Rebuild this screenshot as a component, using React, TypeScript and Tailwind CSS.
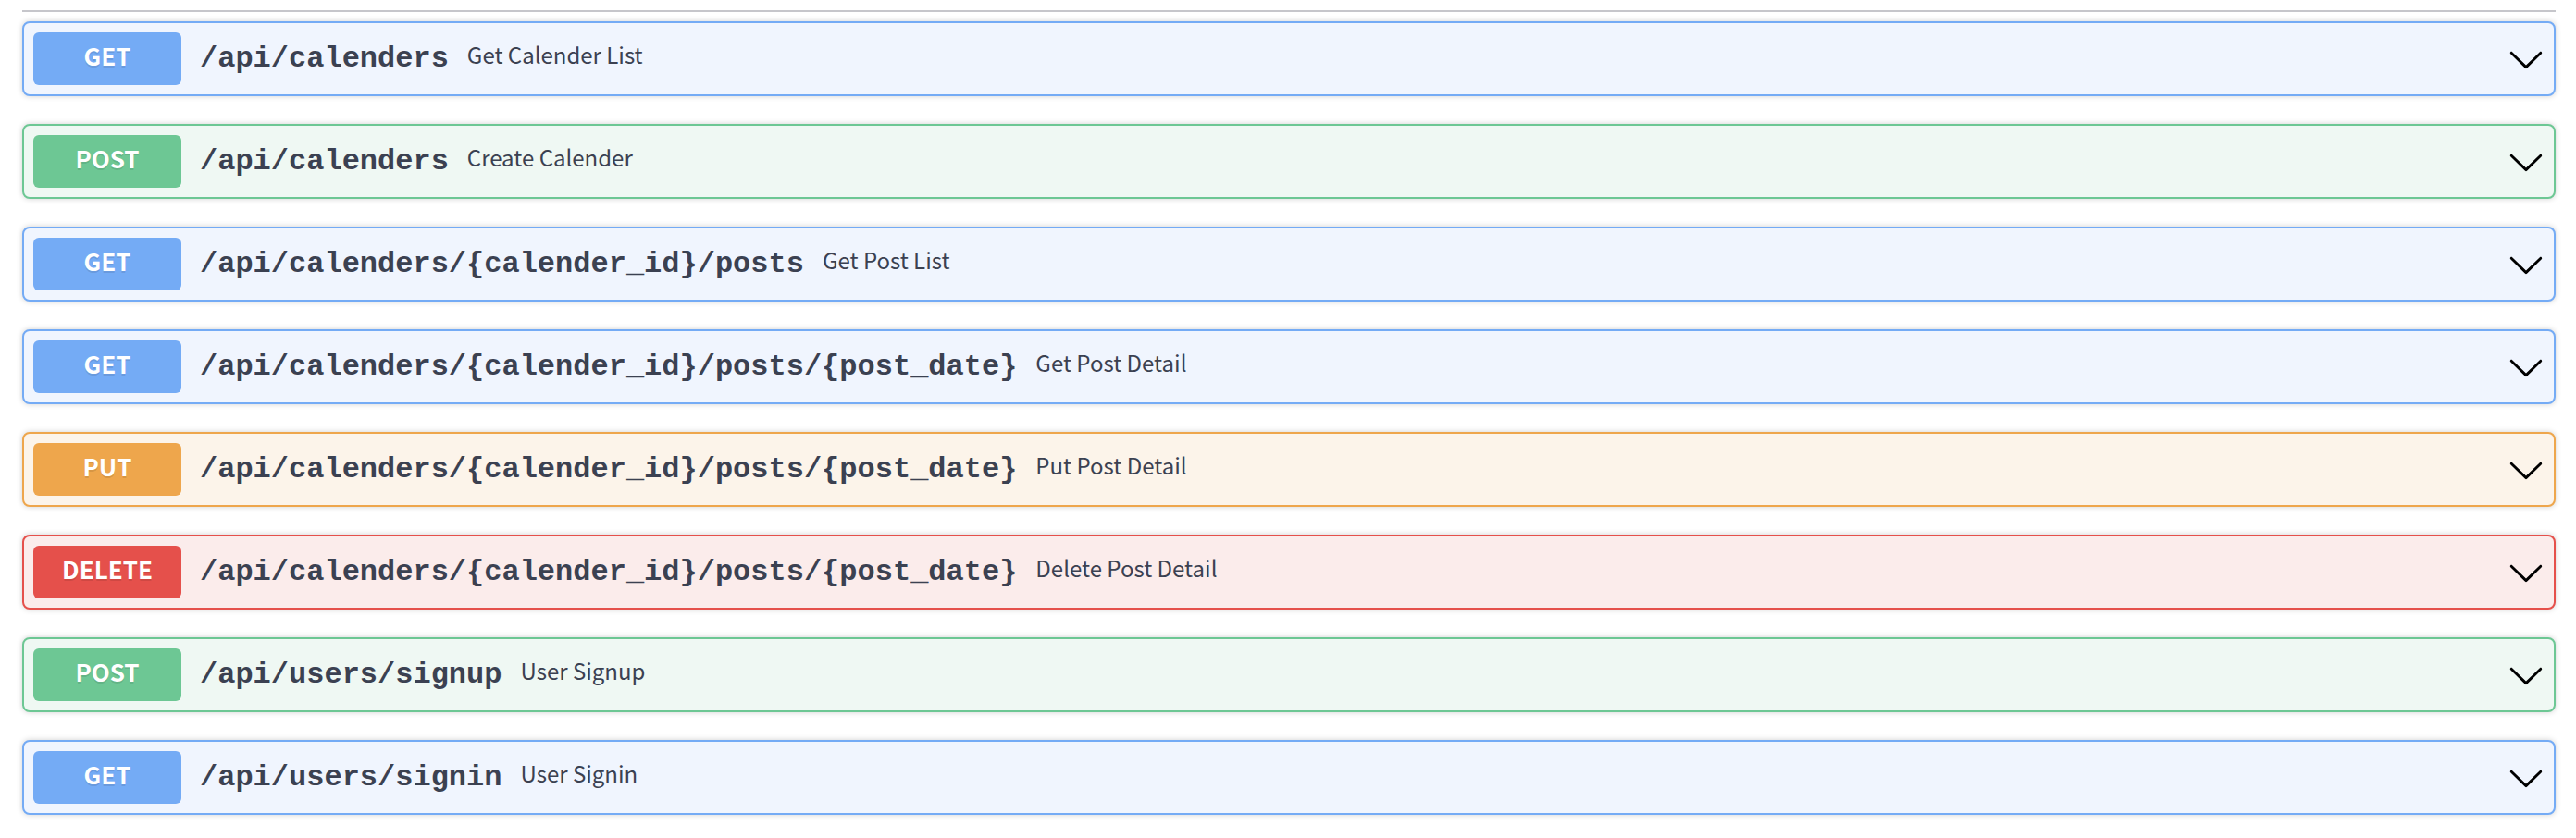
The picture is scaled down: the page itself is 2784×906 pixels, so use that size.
import React from "react";

type Method = "GET" | "POST" | "PUT" | "DELETE";

const methodStyles: Record<Method, { card: string; badge: string }> = {
  GET: { card: "border-[#74abf5] bg-[#f0f5fe]", badge: "bg-[#74abf5]" },
  POST: { card: "border-[#6dc794] bg-[#eff8f3]", badge: "bg-[#6dc794]" },
  PUT: { card: "border-[#eea64c] bg-[#fcf4ea]", badge: "bg-[#eea64c]" },
  DELETE: { card: "border-[#e5504b] bg-[#fbeceb]", badge: "bg-[#e5504b]" },
};

const operations: { method: Method; path: string; summary: string }[] = [
  { method: "GET", path: "/api/calenders", summary: "Get Calender List" },
  { method: "POST", path: "/api/calenders", summary: "Create Calender" },
  { method: "GET", path: "/api/calenders/{calender_id}/posts", summary: "Get Post List" },
  { method: "GET", path: "/api/calenders/{calender_id}/posts/{post_date}", summary: "Get Post Detail" },
  { method: "PUT", path: "/api/calenders/{calender_id}/posts/{post_date}", summary: "Put Post Detail" },
  { method: "DELETE", path: "/api/calenders/{calender_id}/posts/{post_date}", summary: "Delete Post Detail" },
  { method: "POST", path: "/api/users/signup", summary: "User Signup" },
  { method: "GET", path: "/api/users/signin", summary: "User Signin" },
];

const sans = '"Noto Sans CJK KR", "Noto Sans", sans-serif';

const Arrow: React.FC = () => (
  <svg width="40" height="40" viewBox="0 0 20 20" className="shrink-0 fill-black">
    <path d="M17.418 6.109c.272-.268.709-.268.979 0s.271.701 0 .969l-7.908 7.83c-.27.268-.707.268-.979 0l-7.908-7.83c-.27-.268-.27-.701 0-.969.271-.268.709-.268.979 0L10 13.25l7.418-7.141z" />
  </svg>
);

const App: React.FC = () => {
  return (
    <div className="bg-white pl-[24px] pr-[22px] pt-[11px] pb-[20px]">
      <div className="h-[2px] bg-[#c6c6cb]" />
      <div className="mt-[10px] flex flex-col gap-[30px]">
        {operations.map((op, i) => {
          const s = methodStyles[op.method];
          return (
            <div
              key={i}
              className={`flex h-[81px] items-center overflow-hidden rounded-[8px] border-2 p-[10px] shadow-[0_0_6px_rgba(0,0,0,0.19)] ${s.card}`}
            >
              <div
                className={`flex h-[57px] w-[160px] shrink-0 items-center justify-center rounded-[6px] pb-[8px] text-[26px] leading-none font-bold text-white [text-shadow:0_2px_0_rgba(0,0,0,0.1)] ${s.badge}`}
                style={{ fontFamily: sans }}
              >
                {op.method}
              </div>
              <span
                className="px-[20px] text-[32px] leading-none font-bold text-[#3b4151]"
                style={{ fontFamily: '"Liberation Mono", "Courier New", monospace' }}
              >
                {op.path}
              </span>
              <span className="flex-1 pb-[10px] text-[24px] leading-none text-[#3b4151]" style={{ fontFamily: sans }}>
                {op.summary}
              </span>
              <Arrow />
            </div>
          );
        })}
      </div>
    </div>
  );
};

export default App;
